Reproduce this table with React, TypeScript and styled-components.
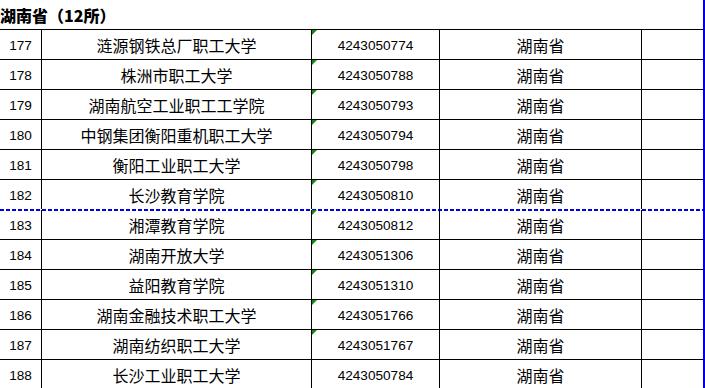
import styled, { createGlobalStyle } from "styled-components";

const GlobalStyle = createGlobalStyle`
  html, body {
    margin: 0;
    padding: 0;
    background: #ffffff;
    overflow: hidden;
  }
`;

const Sheet = styled.div`
  width: 705px;
  height: 388px;
  overflow: hidden;
  box-sizing: border-box;
  border-right: 2px solid #0000e6;
  color: #000;
  font-family: "Noto Sans CJK SC", "Liberation Sans", sans-serif;
`;

const Title = styled.div`
  height: 29px;
  display: flex;
  align-items: center;
  font-size: 16px;
  font-weight: 900;
  padding-top: 1px;
  box-sizing: border-box;
`;

const Row = styled.div<{ $pageBreak?: boolean }>`
  position: relative;
  display: grid;
  grid-template-columns: 41px 270px 128px 202px 62px;
  height: 30px;
  box-sizing: border-box;
  border-top: 1px solid #000;

  ${({ $pageBreak }) =>
    $pageBreak &&
    `
    &::before {
      content: "";
      position: absolute;
      left: 0;
      right: 0;
      top: -1px;
      height: 2px;
      background: repeating-linear-gradient(
        90deg,
        #0000e6 0 4px,
        #ffffff 4px 6px
      );
    }
  `}
`;

const Cell = styled.div<{ $digits?: boolean }>`
  position: relative;
  display: flex;
  align-items: center;
  justify-content: center;
  box-sizing: border-box;
  border-left: 1px solid #000;
  padding-top: 1px;
  font-size: ${({ $digits }) => ($digits ? "13.6px" : "16px")};
  font-family: ${({ $digits }) =>
    $digits
      ? `"Liberation Sans", "Noto Sans CJK SC", sans-serif`
      : `"Noto Sans CJK SC", "Liberation Sans", sans-serif`};
  white-space: nowrap;

  &:first-child {
    border-left: none;
  }
`;

const TextMark = styled.span`
  position: absolute;
  top: 0;
  left: 0;
  width: 0;
  height: 0;
  border-top: 5px solid #118811;
  border-right: 5px solid transparent;
  z-index: 1;
`;

type School = {
  no: number;
  name: string;
  code: string;
  province: string;
  textCode: boolean;
};

const schools: School[] = [
  { no: 177, name: "涟源钢铁总厂职工大学", code: "4243050774", province: "湖南省", textCode: true },
  { no: 178, name: "株洲市职工大学", code: "4243050788", province: "湖南省", textCode: true },
  { no: 179, name: "湖南航空工业职工工学院", code: "4243050793", province: "湖南省", textCode: true },
  { no: 180, name: "中钢集团衡阳重机职工大学", code: "4243050794", province: "湖南省", textCode: true },
  { no: 181, name: "衡阳工业职工大学", code: "4243050798", province: "湖南省", textCode: true },
  { no: 182, name: "长沙教育学院", code: "4243050810", province: "湖南省", textCode: true },
  { no: 183, name: "湘潭教育学院", code: "4243050812", province: "湖南省", textCode: true },
  { no: 184, name: "湖南开放大学", code: "4243051306", province: "湖南省", textCode: true },
  { no: 185, name: "益阳教育学院", code: "4243051310", province: "湖南省", textCode: true },
  { no: 186, name: "湖南金融技术职工大学", code: "4243051766", province: "湖南省", textCode: true },
  { no: 187, name: "湖南纺织职工大学", code: "4243051767", province: "湖南省", textCode: true },
  { no: 188, name: "长沙工业职工大学", code: "4243050784", province: "湖南省", textCode: false },
];

export default function App() {
  return (
    <>
      <GlobalStyle />
      <Sheet>
        <Title>湖南省（12所）</Title>
        {schools.map((s) => (
          <Row key={s.no} $pageBreak={s.no === 183}>
            <Cell $digits>{s.no}</Cell>
            <Cell>{s.name}</Cell>
            <Cell $digits>
              {s.textCode && <TextMark />}
              {s.code}
            </Cell>
            <Cell>{s.province}</Cell>
            <Cell />
          </Row>
        ))}
      </Sheet>
    </>
  );
}
